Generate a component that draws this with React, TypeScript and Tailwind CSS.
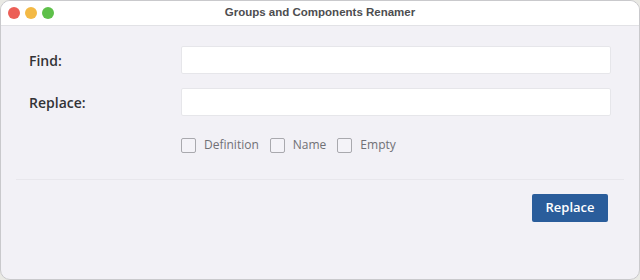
import React from "react"

function Check({ label }: { label: string }) {
  return (
    <label className="flex items-center gap-[8px]">
      <span className="w-[15px] h-[15px] rounded-[2px] border border-[#a9a9ae] bg-[#f4f3f8]" />
      <span className="text-[12px] text-[#707075]">{label}</span>
    </label>
  )
}

export default function App() {
  return (
    <div
      className="w-[640px] h-[280px] bg-[#e9e9e4] overflow-hidden"
      style={{ fontFamily: '"Open Sans", "Noto Sans", sans-serif' }}
    >
      <div className="w-full h-full rounded-[10px] border border-[#c9c9cc] bg-[#f2f1f6] flex flex-col overflow-hidden">
        {/* Title bar */}
        <div className="relative h-[25px] bg-white border-b border-[#e2e2e6] flex items-center justify-center shrink-0">
          <div className="absolute left-[7px] top-[6px] flex gap-[5px]">
            <span className="w-[12px] h-[12px] rounded-full bg-[#ec5f57]" />
            <span className="w-[12px] h-[12px] rounded-full bg-[#f3b945]" />
            <span className="w-[12px] h-[12px] rounded-full bg-[#5ec04a]" />
          </div>
          <span className="text-[11.5px] font-bold text-[#4d4d50] font-['Liberation_Sans',sans-serif]">
            Groups and Components Renamer
          </span>
        </div>

        {/* Form */}
        <div className="pt-[20px] px-[28px] grid grid-cols-[152px_1fr] gap-y-[14px] items-center">
          <div className="text-[14px] font-semibold text-[#333336]">Find:</div>
          <input className="h-[28px] bg-white border border-[#e6e6ea] rounded-[2px] outline-none" />
          <div className="text-[14px] font-semibold text-[#333336]">Replace:</div>
          <input className="h-[28px] bg-white border border-[#e6e6ea] rounded-[2px] outline-none" />
        </div>

        <div className="pl-[180px] mt-[20px] flex items-center gap-[11px]">
          <Check label="Definition" />
          <Check label="Name" />
          <Check label="Empty" />
        </div>

        <div className="mx-[15px] mt-[25px] border-t border-[#e8e7ec]" />

        <div className="flex justify-end pr-[31px] mt-[14px]">
          <button className="w-[76px] h-[28px] rounded-[2px] bg-[#2a5d9b] text-white text-[13px] font-semibold">
            Replace
          </button>
        </div>
      </div>
    </div>
  )
}
